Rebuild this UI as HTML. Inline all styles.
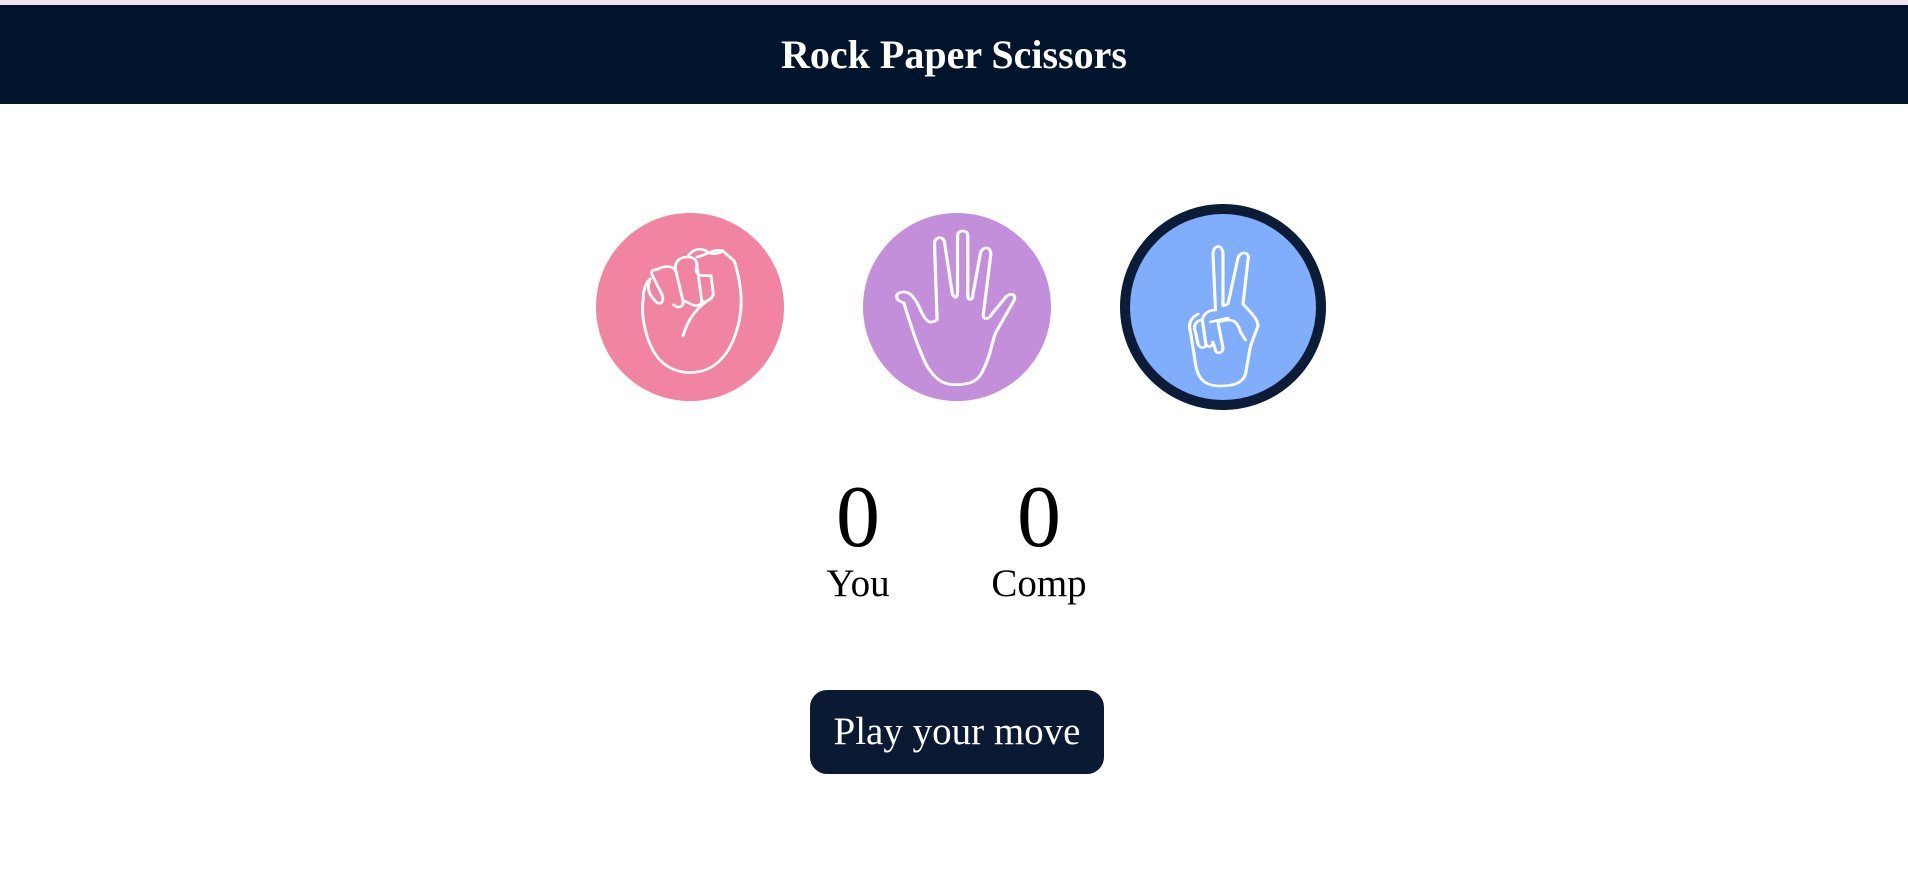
<!DOCTYPE html>
<html><head><meta charset="utf-8"><style>
html,body{margin:0;padding:0;background:#fff;width:1908px;height:895px;overflow:hidden;font-family:"Liberation Serif",serif}
.stripe{height:5px;background:#efe4f2}
header{height:99px;background:#00142b;color:#fff;text-align:center}
header h1{margin:0;font-size:40px;line-height:99px;font-weight:bold}
.c{position:absolute;border-radius:50%;}
.c svg{position:absolute;left:0;top:0}
.score{position:absolute;text-align:center;width:200px;color:#000}
.score .n{font-size:88px;line-height:88px}
.score .l{font-size:39px;line-height:44px}
.btn{position:absolute;left:810px;top:690px;width:294px;height:84px;background:#0a1a33;border-radius:17px;color:#fff;font-size:39px;line-height:84px;text-align:center}
</style></head><body>
<div class="stripe"></div>
<header><h1>Rock Paper Scissors</h1></header>

<div class="c" style="left:596px;top:213px;width:188px;height:188px;background:#f084a1">
<svg width="188" height="188" viewBox="0 0 188 188" fill="none" stroke="#fff" stroke-width="2.5" stroke-linecap="round" stroke-linejoin="round">
<g transform="translate(94 96) scale(1.17 1.04) translate(-94 -94)">
<path d="M60 65 C55 70 54 78 54 85 C52 100 56 125 66 140 C76 154 90 157 103 154 C118 150 128 135 133 118 C139 98 140 78 132 48 L122 38 C114 36 108 42 100 44"/>
<path d="M60 65 C56 75 60 82 66 88 C70 90 72 86 70 80 L62 62 C60 58 62 56 66 56"/>
<path d="M66 56 C72 52 80 52 82 58 L88 86 C89 92 84 94 80 90"/>
<path d="M82 58 C80 50 84 44 92 44 C98 44 100 48 100 52 L104 86 C104 90 100 92 96 90 C92 88 90 86 88 86"/>
<path d="M92 44 C96 36 104 34 110 40 C116 42 120 40 122 38"/>
<path d="M100 52 C98 58 100 62 106 62 L112 62 L114 80 C112 86 106 88 104 86"/>
<path d="M112 84 C100 92 92 104 88 120"/>
</g></svg></div>

<div class="c" style="left:863px;top:213px;width:188px;height:188px;background:#c38fdb">
<svg width="188" height="188" viewBox="0 0 188 188" fill="none" stroke="#fff" stroke-width="2.5" stroke-linecap="round" stroke-linejoin="round">
<g transform="translate(92 94) scale(1.28 1.05) translate(-100 -104)">
<path d="M60 100 C54 98 52 92 58 90 C64 88 68 94 72 104 C76 116 80 122 86 116 L84 44 C84 36 92 36 92 44 L98 92 C100 96 102 96 102 90 L102 36 C102 30 110 30 110 36 L110 94 C110 98 114 98 114 92 L120 52 C122 46 128 46 128 54 L122 112 C122 116 126 116 128 112 L140 94 C144 90 148 92 146 98 L132 128 C128 140 128 150 122 164 C118 176 110 178 100 178 C90 178 84 172 78 160 C72 146 66 124 60 100 Z"/>
</g></svg></div>

<div class="c" style="left:1120px;top:204px;width:186px;height:186px;background:#80aefc;border:10px solid #0b1c36">
<svg width="186" height="186" viewBox="0 0 186 186" fill="none" stroke="#fff" stroke-width="2.5" stroke-linecap="round" stroke-linejoin="round">
<g transform="translate(93 100) scale(1.25 1.0) translate(-96 -100)">
<path d="M76 100 C70 104 68 110 70 118 L74 150 C76 166 82 172 94 172 C106 172 112 168 114 160 L118 132 L124 112 C124 104 116 96 112 90 L116 46 C118 38 110 36 108 44 L100 90 L96 92 L96 40 C96 30 88 30 88 40 L90 96"/>
<path d="M90 96 C82 96 78 104 80 110 L82 128 C82 134 88 134 88 128"/>
<path d="M78 106 C74 108 72 112 74 118 L76 130 C78 136 84 134 82 128"/>
<path d="M88 128 L90 136 C90 140 96 140 96 134 L92 108 L100 106 C106 106 108 110 110 118 L114 126"/>
<path d="M86 108 L100 104"/>
</g></svg></div>

<div class="score" style="left:758px;top:474px"><div class="n">0</div><div class="l">You</div></div>
<div class="score" style="left:939px;top:474px"><div class="n">0</div><div class="l">Comp</div></div>

<div class="btn">Play your move</div>
</body></html>
